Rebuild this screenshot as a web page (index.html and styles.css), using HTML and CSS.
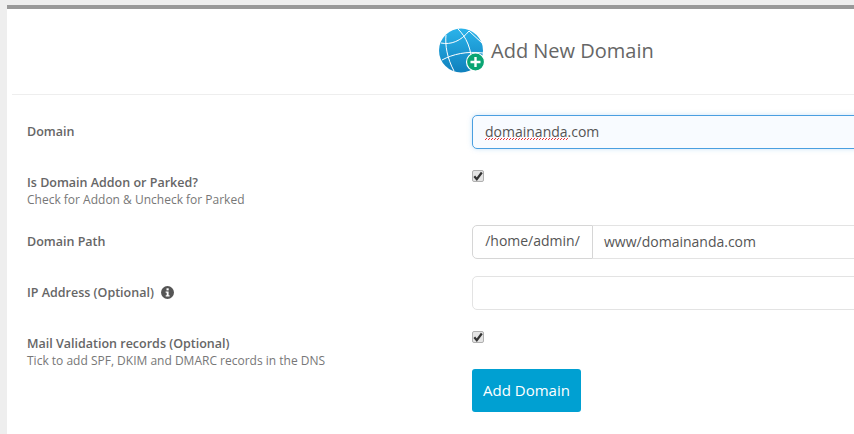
FILE: index.html
```html
<!DOCTYPE html>
<html lang="en">
<head>
<meta charset="utf-8">
<title>Add New Domain</title>
<link rel="stylesheet" href="styles.css">
</head>
<body>
<main class="panel">
  <header class="head">
    <svg class="globe" width="46" height="46" viewBox="0 0 46 46" aria-hidden="true">
      <defs>
        <linearGradient id="g" x1="0" y1="0" x2="0" y2="1">
          <stop offset="0" stop-color="#2bb3ea"/>
          <stop offset="1" stop-color="#0f80bd"/>
        </linearGradient>
      </defs>
      <circle cx="22" cy="22.500" r="22" fill="url(#g)"/>
      <g fill="none" stroke="#fff" stroke-width="1">
        <path d="M2 15C12 17 22 13 30 3"/>
        <path d="M7 7C6 17 8 30 15 43"/>
        <path d="M19 1C27 9 33 20 33 40"/>
        <path d="M3 32C14 26 28 23 44 25"/>
        <path d="M30 3L43 15"/>
      </g>
      <circle cx="36.500" cy="34" r="9" fill="#0aa573" stroke="#fff" stroke-width="1.200"/>
      <path d="M36.500 29v10M31.500 34h10" stroke="#fff" stroke-width="2.400" fill="none"/>
    </svg>
    <h1 class="title">Add New Domain</h1>
  </header>
  <form class="form">
    <div class="row row-domain">
      <div class="label-col"><label class="label">Domain</label></div>
      <div class="control"><div class="input focus"><span class="typed">domainanda</span>.com</div></div>
    </div>
    <div class="row row-addon">
      <div class="label-col">
        <label class="label">Is Domain Addon or Parked?</label>
        <p class="hint">Check for Addon &amp; Uncheck for Parked</p>
      </div>
      <div class="control">
        <span class="check" role="checkbox" aria-checked="true">
          <svg width="10" height="10" viewBox="0 0 10 10" aria-hidden="true"><path d="M1.300 5.200L3.800 8.200L8.800 1.500" fill="none" stroke="#333" stroke-width="2.200"/></svg>
        </span>
      </div>
    </div>
    <div class="row row-path">
      <div class="label-col"><label class="label">Domain Path</label></div>
      <div class="control">
        <div class="group">
          <span class="addon">/home/admin/</span>
          <div class="input grouped">www/domainanda.com</div>
        </div>
      </div>
    </div>
    <div class="row row-ip">
      <div class="label-col">
        <label class="label">IP Address (Optional)
          <svg class="info" width="13" height="13" viewBox="0 0 13 13" aria-hidden="true">
            <circle cx="6.500" cy="6.500" r="6.500" fill="#555"/>
            <rect x="5.500" y="2.300" width="2.200" height="2.100" fill="#fff"/>
            <path d="M4.600 5.500h3v3.700h1v1.200H4.700V9.200h1V6.700h-1z" fill="#fff"/>
          </svg>
        </label>
      </div>
      <div class="control"><div class="input"></div></div>
    </div>
    <div class="row row-mail">
      <div class="label-col">
        <label class="label">Mail Validation records (Optional)</label>
        <p class="hint">Tick to add SPF, DKIM and DMARC records in the DNS</p>
      </div>
      <div class="control">
        <span class="check" role="checkbox" aria-checked="true">
          <svg width="10" height="10" viewBox="0 0 10 10" aria-hidden="true"><path d="M1.300 5.200L3.800 8.200L8.800 1.500" fill="none" stroke="#333" stroke-width="2.200"/></svg>
        </span>
      </div>
    </div>
    <div class="row row-submit">
      <div class="label-col"></div>
      <div class="control"><button class="btn" type="button">Add Domain</button></div>
    </div>
  </form>
</main>
</body>
</html>
```
FILE: styles.css
```css
* { box-sizing: border-box; }
html, body { height: 100%; }
body {
  margin: 0;
  padding: 5px 0 0 7px;
  background: #eeeeee;
  font-family: "Open Sans", "Liberation Sans", sans-serif;
  overflow: hidden;
}
.panel {
  height: 429px;
  background: #fff;
  border-top: 4px solid #999999;
  padding-left: 5px;
  overflow: hidden;
}
.head {
  height: 86px;
  padding: 19px 0 0 427px;
  border-bottom: 1px solid #eeeeee;
  display: flex;
  align-items: flex-start;
}
.globe { flex: none; margin-right: 6px; }
.title {
  margin: 9px 0 0;
  font-size: 20px;
  line-height: 27px;
  font-weight: 400;
  color: #666;
  white-space: nowrap;
}
.form { padding: 20px 0 0 15px; }
.row { display: flex; align-items: flex-start; }
.label-col { width: 445px; flex: none; }
.control { width: 420px; flex: none; }
.label {
  display: block;
  font-size: 12.500px;
  line-height: 18px;
  font-weight: 600;
  color: #666;
}
.info { margin-left: 4px; vertical-align: -2px; }
.hint {
  margin: 0;
  font-size: 12px;
  line-height: 15px;
  color: #777;
}
.row-domain { height: 55px; }
.row-domain .label { margin-top: 8px; }
.row-addon { height: 55px; }
.row-addon .label { margin-top: 4px; }
.row-path { height: 51px; }
.row-path .label { margin-top: 8px; }
.row-ip { height: 55px; }
.row-ip .label { margin-top: 8px; }
.row-mail { height: 38px; }
.row-mail .label { margin-top: 4px; }
.input {
  height: 34px;
  padding: 0 12px;
  border: 1px solid #e3e3e3;
  border-radius: 5px;
  font-size: 14px;
  line-height: 32px;
  color: #555;
  background: #fff;
}
.focus {
  border-color: #4a9fe0;
  background: #f8fbff;
  box-shadow: 0 0 5px rgba(102, 175, 233, .35);
}
.typed {
  background-image:
    repeating-linear-gradient(90deg, #e33 0 1px, transparent 1px 3px),
    repeating-linear-gradient(90deg, transparent 0 1px, #e33 1px 2px, transparent 2px 3px);
  background-repeat: no-repeat;
  background-size: 100% 1px;
  background-position: 0 calc(100% - 1px), 0 calc(100% - 2px);
}
.check {
  display: flex;
  align-items: center;
  justify-content: center;
  width: 12px;
  height: 12px;
  border: 1px solid #b0b0b0;
  border-radius: 2px;
  background: #e4e4e4;
}
.group { display: flex; }
.addon {
  flex: none;
  width: 121px;
  height: 34px;
  border: 1px solid #d6d6d6;
  border-radius: 5px 0 0 5px;
  font-size: 14px;
  line-height: 30px;
  text-align: center;
  color: #555;
}
.grouped {
  flex: 1;
  border-left: 0;
  border-radius: 0 5px 5px 0;
  padding-left: 11px;
}
.btn {
  display: block;
  width: 109px;
  height: 43px;
  padding: 0 0 2px;
  border: 0;
  border-radius: 3px;
  background: #00a0d2;
  color: #fff;
  font-family: inherit;
  font-size: 15px;
  font-weight: 400;
}
```
